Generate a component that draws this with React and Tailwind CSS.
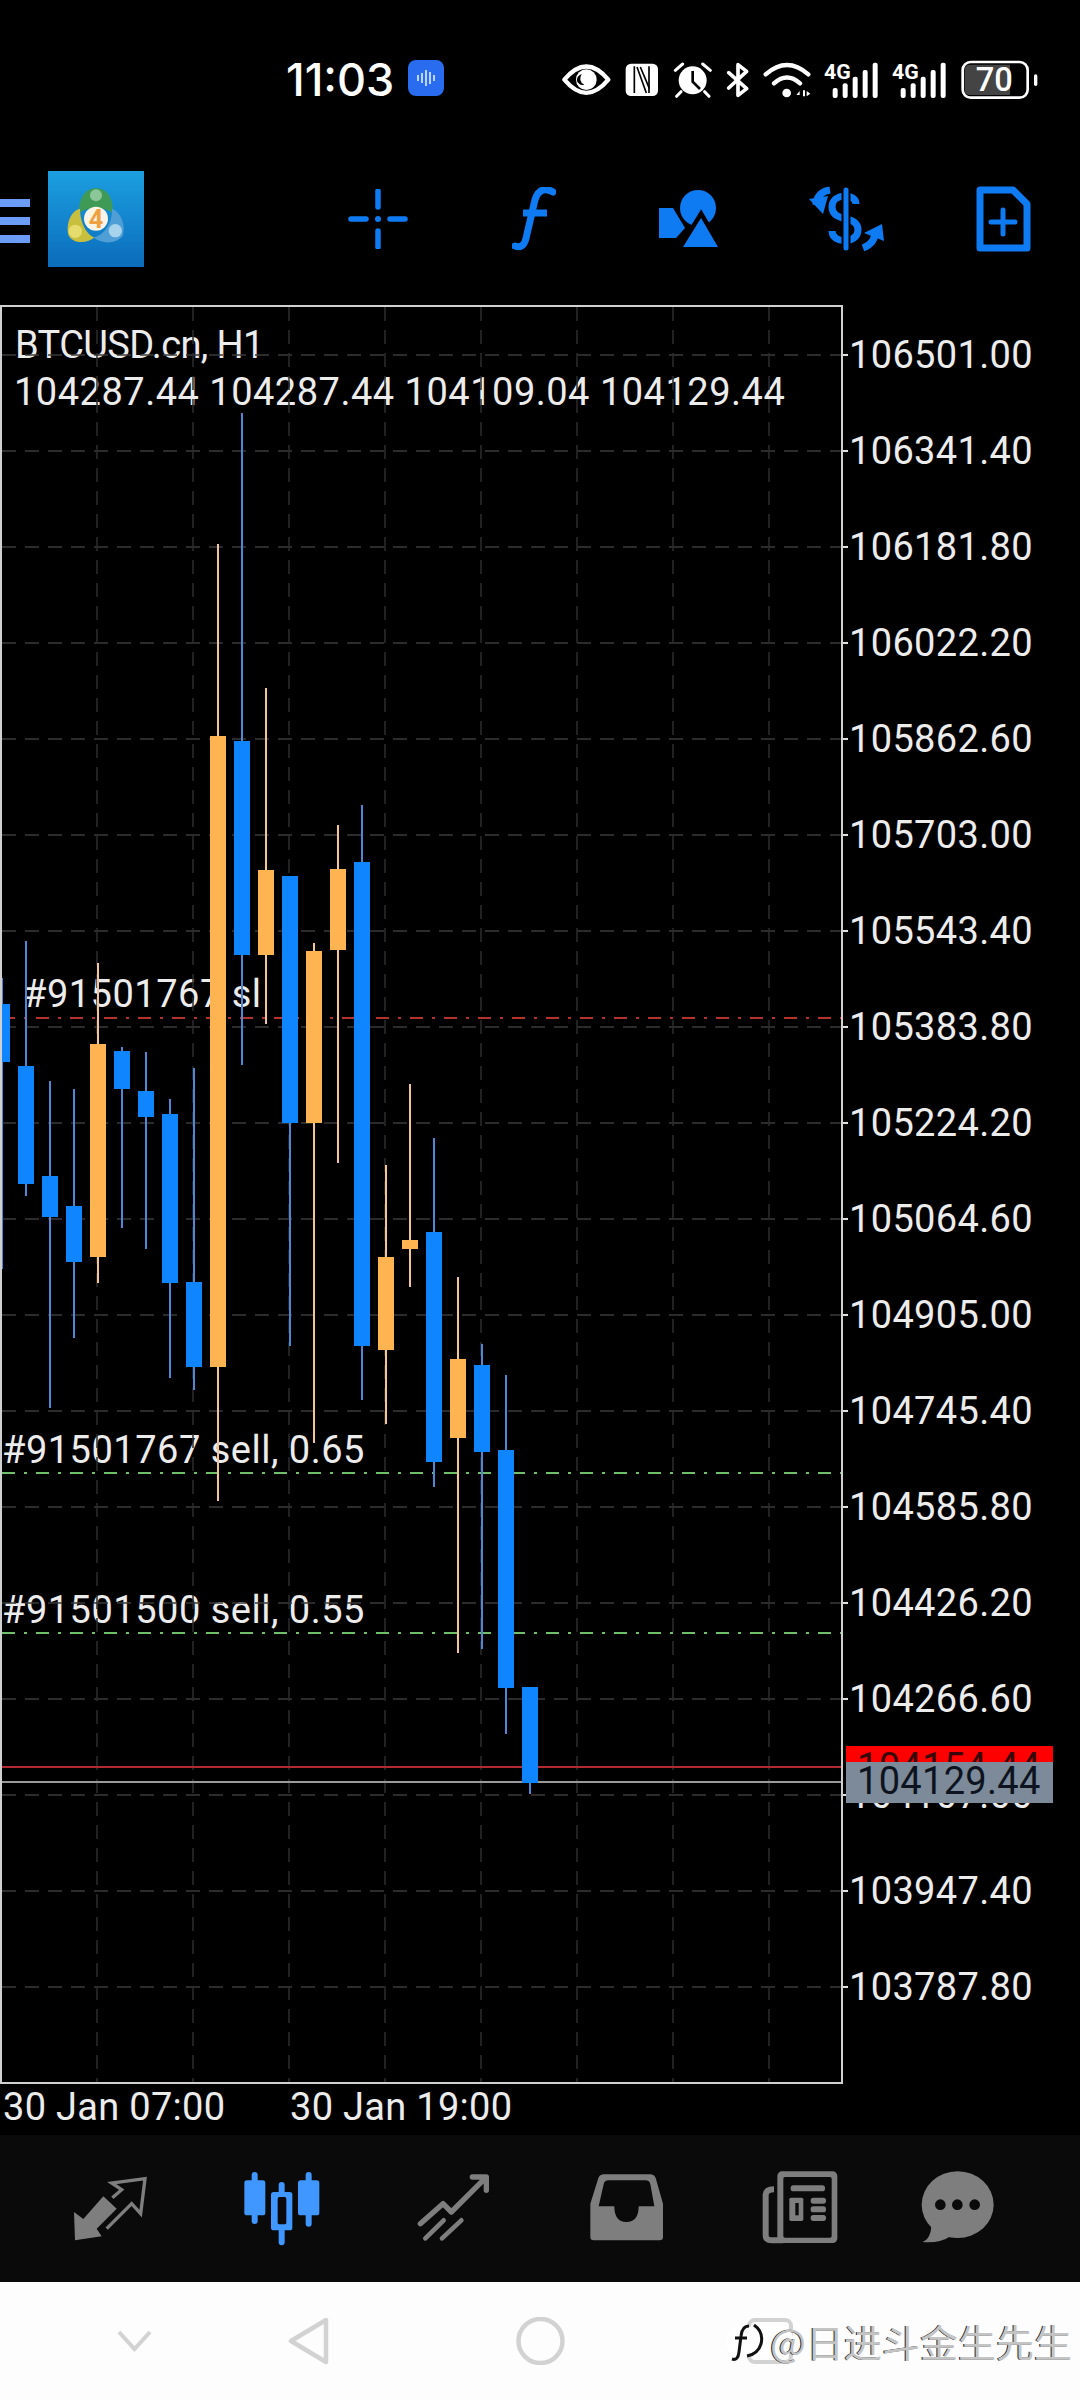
// MT4 chart screen
const GRID_Y = Array.from({ length: 18 }, (_, i) => 355 + i * 96);
const GRID_X = Array.from({ length: 8 }, (_, i) => 97 + i * 96);

const PRICES = [
  '106501.00', '106341.40', '106181.80', '106022.20', '105862.60', '105703.00',
  '105543.40', '105383.80', '105224.20', '105064.60', '104905.00', '104745.40',
  '104585.80', '104426.20', '104266.60', '104107.00', '103947.40', '103787.80',
];

// x, wick top, body top, body bottom, wick bottom, up
const CANDLES = [
  [2, 978, 1004, 1062, 1269, 0],
  [26, 941, 1066, 1184, 1196, 0],
  [50, 1081, 1176, 1217, 1408, 0],
  [74, 1089, 1206, 1262, 1338, 0],
  [98, 963, 1044, 1257, 1283, 1],
  [122, 1047, 1051, 1089, 1228, 0],
  [146, 1052, 1091, 1117, 1249, 0],
  [170, 1099, 1114, 1283, 1378, 0],
  [194, 1068, 1282, 1367, 1390, 0],
  [218, 544, 736, 1367, 1501, 1],
  [242, 413, 741, 955, 1065, 0],
  [266, 688, 870, 955, 1024, 1],
  [290, 876, 876, 1123, 1346, 0],
  [314, 943, 951, 1123, 1443, 1],
  [338, 825, 869, 950, 1163, 1],
  [362, 805, 862, 1346, 1400, 0],
  [386, 1165, 1257, 1350, 1424, 1],
  [410, 1084, 1240, 1249, 1287, 1],
  [434, 1138, 1232, 1462, 1487, 0],
  [458, 1277, 1359, 1438, 1653, 1],
  [482, 1344, 1365, 1452, 1649, 0],
  [506, 1375, 1450, 1688, 1734, 0],
  [530, 1687, 1687, 1783, 1794, 0],
];

function ChartCanvas() {
  return (
    <svg className="absolute inset-0" width="839" height="1775" viewBox="2 307 839 1775">
      {GRID_Y.map((y) => (
        <line key={y} x1="2" x2="841" y1={y} y2={y} stroke="#3a3a3a" strokeWidth="1.5" strokeDasharray="14 9" />
      ))}
      {GRID_X.map((x) => (
        <line key={x} x1={x} x2={x} y1="307" y2="2082" stroke="#2c2c2c" strokeWidth="1.5" strokeDasharray="14 9" />
      ))}
      <line x1="2" x2="841" y1="1018" y2="1018" stroke="#b5332e" strokeWidth="2" strokeDasharray="13 9 3 9" />
      <line x1="2" x2="841" y1="1473" y2="1473" stroke="#6fbf6a" strokeWidth="2" strokeDasharray="13 9 3 9" />
      <line x1="2" x2="841" y1="1633" y2="1633" stroke="#6fbf6a" strokeWidth="2" strokeDasharray="13 9 3 9" />
      <line x1="2" x2="841" y1="1767" y2="1767" stroke="#b02a30" strokeWidth="2" />
      <line x1="2" x2="841" y1="1782" y2="1782" stroke="#9a9a9a" strokeWidth="2" />
      {CANDLES.map(([x, wt, bt, bb, wb, up]) => (
        <g key={x}>
          <line x1={x} x2={x} y1={wt} y2={wb} stroke={up ? '#f4c498' : '#4f86d6'} strokeWidth="2" />
          <rect x={x - 8} y={bt} width="16" height={bb - bt} fill={up ? '#ffb452' : '#0f86ff'} />
        </g>
      ))}
    </svg>
  );
}

function StatusIcons() {
  return (
    <div className="flex items-center ml-[117px]">
      {/* eye */}
      <svg width="52" height="36" viewBox="34 32 156 108">
        <path d="M44 85 Q110 6 176 85 Q110 164 44 85Z" fill="#000" stroke="#fff" strokeWidth="13" strokeLinejoin="round" />
        <circle cx="110" cy="85" r="31" fill="#fff" />
        <path d="M96 68 Q84 90 104 100 Q90 104 82 90 Q80 74 96 68Z" fill="#000" />
      </svg>
      {/* nfc */}
      <svg className="ml-[12px]" width="34" height="34" viewBox="226 36 102 102">
        <rect x="228" y="38" width="97" height="97" rx="16" fill="#fff" />
        <path d="M254 46 V126 M298 46 V126" stroke="#000" strokeWidth="5" />
        <path d="M262 48 L290 126 M272 48 L299 112" stroke="#000" strokeWidth="5" />
      </svg>
      {/* alarm */}
      <svg className="ml-[14px]" width="40" height="36" viewBox="369 33 120 108">
        <circle cx="428" cy="88" r="42" fill="#fff" />
        <path d="M428 60 V92 L450 114" fill="none" stroke="#000" strokeWidth="8" />
        <path d="M376 58 L398 39 M481 58 L458 39 M393 122 L380 136 M464 122 L477 136" stroke="#fff" strokeWidth="9" strokeLinecap="round" />
      </svg>
      {/* bluetooth */}
      <svg className="ml-[13px]" width="24" height="36" viewBox="528 36 72 108">
        <path d="M536 68 L590 116 L564 136 V44 L590 64 L536 114" fill="none" stroke="#fff" strokeWidth="11" strokeLinejoin="round" strokeLinecap="round" />
      </svg>
      {/* wifi */}
      <svg className="ml-[13px]" width="48" height="36" viewBox="640 33 144 108">
        <path d="M648 70 Q712 14 776 70 M673 97 Q712 62 751 97" fill="none" stroke="#fff" strokeWidth="13" strokeLinecap="round" />
        <circle cx="711" cy="126" r="13" fill="#fff" />
        <path d="M740 132 L750 120 V132Z M760 118 H766 V136 H760Z M771 120 L782 128 L771 136Z" fill="#fff" />
      </svg>
      <Signal className="ml-[13px]" />
      <Signal className="ml-[14px]" />
      {/* battery */}
      <svg className="ml-[14px]" width="78" height="40" viewBox="1232 27 234 120">
        <rect x="1240" y="33" width="195" height="107" rx="24" fill="#000" stroke="#fff" strokeWidth="8" />
        <path d="M1262 41 H1382 V132 H1262 Q1246 132 1246 116 V57 Q1246 41 1262 41Z" fill="#444" />
        <text x="1335" y="121" textAnchor="middle" fill="#fff" fontSize="98" fontWeight="500" fontFamily="Roboto, sans-serif">70</text>
        <rect x="1454" y="70" width="10" height="35" rx="5" fill="#fff" />
      </svg>
    </div>
  );
}

function Signal({ className }) {
  return (
    <svg className={className} width="54" height="36" viewBox="824 32 162 108">
      <text x="824" y="84" fill="#fff" fontSize="60" fontWeight="700" fontFamily="Roboto, sans-serif" textLength="80" lengthAdjust="spacingAndGlyphs">4G</text>
      <rect x="850" y="110" width="15" height="30" rx="6" fill="#fff" />
      <rect x="880" y="96" width="15" height="44" rx="6" fill="#fff" />
      <rect x="910" y="76" width="15" height="64" rx="6" fill="#fff" />
      <rect x="940" y="56" width="15" height="84" rx="6" fill="#fff" />
      <rect x="970" y="34" width="15" height="106" rx="6" fill="#fff" />
    </svg>
  );
}

function Mt4Logo() {
  return (
    <svg className="ml-[18px]" width="96" height="96" viewBox="144 33 288 288">
      <defs>
        <linearGradient id="logoBg" x1="0" y1="0" x2="0" y2="1">
          <stop offset="0" stopColor="#1c9fe0" />
          <stop offset="1" stopColor="#0b6cbc" />
        </linearGradient>
      </defs>
      <rect x="144" y="33" width="288" height="288" fill="url(#logoBg)" />
      <path d="M238 160 C234 108 262 85 288 85 C316 85 342 108 338 160 C320 140 256 140 238 160Z" fill="#3f9a55" />
      <circle cx="288" cy="106" r="18" fill="#8cc79a" />
      <path d="M240 146 C212 153 198 190 205 224 C216 252 262 252 284 232 C262 226 240 190 240 146Z" fill="#c9bf3e" />
      <circle cx="226" cy="214" r="20" fill="#e6dc6e" />
      <path d="M336 146 C364 158 378 195 368 228 C346 254 306 252 280 232 C312 226 338 190 336 146Z" fill="#4f9fd6" />
      <circle cx="346" cy="212" r="20" fill="#a7d3ec" />
      <circle cx="288" cy="176" r="36" fill="#fbf3e6" />
      <text x="288" y="203" textAnchor="middle" fill="#f0a040" fontSize="76" fontWeight="700" fontFamily="Roboto, sans-serif">4</text>
    </svg>
  );
}

function Toolbar() {
  const blue = '#0f7bf2';
  return (
    <div className="flex items-center h-[145px] pb-[38px] pt-[11px]">
      <div className="flex flex-col gap-[10px] mt-[4px]">
        <div className="w-[30px] h-[8px] bg-[#6c9df6]" />
        <div className="w-[30px] h-[8px] bg-[#6c9df6]" />
        <div className="w-[30px] h-[8px] bg-[#6c9df6]" />
      </div>
      <Mt4Logo />
      {/* crosshair */}
      <svg className="ml-[204px]" width="60" height="60" viewBox="348 189 60 60">
        <path d="M378 191 V207 M378 231 V247 M351 219 H366 M390 219 H405" stroke={blue} strokeWidth="5.5" strokeLinecap="round" />
        <circle cx="378" cy="219" r="3" fill={blue} />
      </svg>
      {/* function */}
      <svg className="ml-[104px]" width="44" height="64" viewBox="513 187 44 64">
        <path d="M554 192 C544 186 537 192 535 204 L528 234 C526 246 522 248 516 246" fill="none" stroke={blue} strokeWidth="7" strokeLinecap="round" />
        <path d="M524 213 H548" stroke={blue} strokeWidth="7" />
      </svg>
      {/* objects */}
      <svg className="ml-[103px]" width="60" height="60" viewBox="660 188 60 60">
        <path d="M660 207 H674 L686 227 L677 237 H660Z" fill={blue} />
        <ellipse cx="699" cy="207" rx="18" ry="18" fill={blue} />
        <path d="M702 217 L684 246 H719Z" fill={blue} stroke="#000" strokeWidth="9" strokeLinejoin="miter" paintOrder="stroke" />
      </svg>
      {/* trade */}
      <svg className="ml-[90px]" width="76" height="66" viewBox="809 186 76 66">
        <path d="M856 204 C856 193 832 193 832 207 C832 223 858 214 858 230 C858 244 832 244 832 231" fill="none" stroke={blue} strokeWidth="7" />
        <path d="M846 190 V248" stroke="#000" strokeWidth="9" />
        <path d="M846 190 V248" stroke={blue} strokeWidth="5" strokeLinecap="round" />
        <path d="M830 190 Q817 192 816 205" fill="none" stroke={blue} strokeWidth="7" />
        <path d="M809 199 L828 196 L823 214Z" fill={blue} />
        <path d="M863 248 Q876 243 875 230" fill="none" stroke={blue} strokeWidth="7" />
        <path d="M864 233 L882 224 L884 241Z" fill={blue} />
      </svg>
      {/* new order */}
      <svg className="ml-[90px]" width="56" height="68" viewBox="974 185 56 68">
        <path d="M979 190 H1012 L1026 204 V248 H979Z" fill="none" stroke={blue} strokeWidth="7" strokeLinejoin="round" />
        <path d="M1002 210 V234 M990 222 H1014" stroke={blue} strokeWidth="5" strokeLinecap="round" />
      </svg>
    </div>
  );
}

function TabBar() {
  const gray = '#7e7e7e';
  const bg = '#0a0a0a';
  return (
    <div className="flex items-center h-[147px] pb-[3px] pl-[70px] bg-[#0a0a0a]">
      <svg width="80" height="80" viewBox="60 20 240 240">
        <path d="M72 155 L100 176 L160 108 L200 145 L140 205 L155 228 L75 240Z" fill={gray} />
        <path d="M170 205 L245 130 L272 160 L285 55 L185 68 L215 88 L187 112" fill="none" stroke={gray} strokeWidth="10" />
      </svg>
      <svg className="ml-[92px]" width="80" height="80" viewBox="575 20 240 240">
        <path d="M613 44 V182 M775 44 V190 M694 74 V246" stroke="#3f97ff" strokeWidth="18" strokeLinecap="round" />
        <rect x="582" y="60" width="63" height="105" rx="8" fill="#3f97ff" />
        <rect x="743" y="60" width="64" height="105" rx="8" fill="#3f97ff" />
        <rect x="662" y="95" width="64" height="115" rx="8" fill="#3f97ff" />
        <rect x="682" y="110" width="26" height="82" rx="5" fill={bg} />
      </svg>
      <svg className="ml-[91px]" width="80" height="80" viewBox="1090 20 240 240">
        <path d="M1112 190 L1180 130 L1205 155 L1303 57 M1268 50 H1310 V90" fill="none" stroke={gray} strokeWidth="16" strokeLinecap="round" strokeLinejoin="round" />
        <path d="M1127 234 L1182 180 M1177 234 L1235 180" stroke={gray} strokeWidth="14" strokeLinecap="round" />
      </svg>
      <svg className="ml-[94px]" width="80" height="80" viewBox="50 20 240 240">
        <path d="M100 42 H240 Q255 42 258 60 L278 130 V230 Q278 240 268 240 H70 Q60 240 60 230 V130 L82 60 Q85 42 100 42Z" fill={gray} />
        <path d="M115 60 H225 Q238 60 240 72 L252 138 H205 Q205 185 168 185 Q132 185 132 138 H85 L100 72 Q102 60 115 60Z" fill={bg} />
      </svg>
      <svg className="ml-[93px]" width="80" height="80" viewBox="570 20 240 240">
        <path d="M612 87 Q588 87 587 104 V225 Q587 240 605 240 H640" fill="none" stroke={gray} strokeWidth="18" />
        <rect x="622" y="33" width="180" height="215" rx="14" fill={gray} />
        <rect x="640" y="50" width="145" height="182" rx="5" fill={bg} />
        <rect x="662" y="75" width="103" height="18" rx="8" fill={gray} />
        <rect x="658" y="112" width="42" height="70" rx="5" fill={gray} />
        <rect x="676" y="128" width="10" height="37" fill={bg} />
        <rect x="722" y="112" width="46" height="18" rx="8" fill={gray} />
        <rect x="722" y="138" width="46" height="18" rx="8" fill={gray} />
        <rect x="722" y="164" width="46" height="18" rx="8" fill={gray} />
      </svg>
      <svg className="ml-[78px]" width="80" height="80" viewBox="1045 20 240 240">
        <ellipse cx="1164" cy="133" rx="108" ry="100" fill={gray} />
        <path d="M1085 190 Q1085 235 1058 245 Q1110 250 1145 226Z" fill={gray} />
        <circle cx="1112" cy="133" r="16" fill={bg} />
        <circle cx="1163" cy="133" r="16" fill={bg} />
        <circle cx="1215" cy="133" r="16" fill={bg} />
      </svg>
    </div>
  );
}

function NavBar() {
  const c = '#d2d2d2';
  return (
    <div className="flex items-center h-[118px] bg-[#fdfdfd]">
      <svg className="ml-[116px]" width="37" height="22" viewBox="0 0 37 22">
        <path d="M3 2 L18.5 19 L34 2" fill="none" stroke={c} strokeWidth="4" />
      </svg>
      <svg className="ml-[135px]" width="41" height="48" viewBox="0 0 41 48">
        <path d="M38 3 V45 L3 24Z" fill="none" stroke={c} strokeWidth="4.5" strokeLinejoin="round" />
      </svg>
      <svg className="ml-[187px]" width="49" height="48" viewBox="0 0 49 48">
        <ellipse cx="24.5" cy="24" rx="22" ry="22" fill="none" stroke={c} strokeWidth="4.5" />
      </svg>
      {/* recents button under the douyin watermark */}
      <div className="relative ml-[162px] flex items-center">
        <svg width="66" height="46" viewBox="0 0 66 46">
          <rect x="22" y="2" width="42" height="42" rx="6" fill="none" stroke={c} strokeWidth="4" />
          <rect x="0" y="9" width="66" height="28" rx="10" fill="#fff" />
          <path d="M22 8 Q15 8 14 18 L12 34 Q11 43 5 41 M8 20 H20" fill="none" stroke="#111" strokeWidth="3" />
          <path d="M27 7 Q37 14 34 26 Q31 36 20 38" fill="none" stroke="#111" strokeWidth="3" />
        </svg>
        <span className="ml-[-23px] text-[38px] leading-none whitespace-nowrap text-[#c4c4c4] [text-shadow:-1px_0_0_#222] font-['Noto_Sans_CJK_SC',sans-serif]">
          @日进斗金生先生
        </span>
      </div>
    </div>
  );
}

export default function App() {
  return (
    <div className="w-[1080px] h-[2400px] bg-black overflow-hidden text-[#ececec] font-['Roboto',sans-serif]">
      {/* Status bar */}
      <div className="flex items-start h-[160px] pt-[60px] pl-[286px]">
        <span className="w-[108px] text-[45px] leading-[40px] font-medium text-white font-['Inter',sans-serif]">11:03</span>
        <div className="flex items-center justify-center gap-[2px] ml-[14px] w-[36px] h-[36px] rounded-[8px] bg-[#2a6cf0]">
          <span className="w-[2px] h-[6px] bg-[#bcd4ff]" />
          <span className="w-[2px] h-[10px] bg-[#bcd4ff]" />
          <span className="w-[2px] h-[16px] bg-[#bcd4ff]" />
          <span className="w-[2px] h-[12px] bg-[#bcd4ff]" />
          <span className="w-[2px] h-[6px] bg-[#bcd4ff]" />
        </div>
        <StatusIcons />
      </div>

      <Toolbar />

      {/* Chart + price axis */}
      <div className="flex h-[1779px]">
        <div className="relative w-[843px] h-[1779px] border-2 border-[#d0d0d0] overflow-hidden">
          <div className="absolute left-[13px] top-[19px] text-[38px] leading-none whitespace-nowrap tracking-[-0.6px]">BTCUSD.cn, H1</div>
          <div className="absolute left-[12px] top-[66px] text-[38px] leading-none whitespace-nowrap tracking-[0.5px]">104287.44 104287.44 104109.04 104129.44</div>
          <div className="absolute left-[21px] top-[668px] text-[38px] leading-none whitespace-nowrap tracking-[0.5px]">#91501767 sl</div>
          <div className="absolute left-[0px] top-[1124px] text-[38px] leading-none whitespace-nowrap tracking-[0.5px]">#91501767 sell, 0.65</div>
          <div className="absolute left-[0px] top-[1284px] text-[38px] leading-none whitespace-nowrap tracking-[0.5px]">#91501500 sell, 0.55</div>
          <ChartCanvas />
        </div>
        <div className="relative flex-1 pt-[2px]">
          {PRICES.map((p) => (
            <div key={p} className="flex items-center h-[96px]">
              <span className="w-[5px] h-[2px] bg-[#e0e0e0]" />
              <span className="ml-[1px] text-[38px] leading-none tracking-[0.35px]">{p}</span>
            </div>
          ))}
          <div className="absolute left-[3px] top-[1441px] w-[207px] h-[16px] overflow-hidden bg-[#ff0000] pl-[11px] pt-[2px] text-[38px] leading-none tracking-[0.3px] text-[#3a0508]">
            104154.44
          </div>
          <div className="absolute left-[3px] top-[1457px] w-[207px] h-[41px] bg-[#7c8a99] pl-[11px] text-[38px] leading-[38px] tracking-[0.3px] text-[#0d1420]">
            104129.44
          </div>
        </div>
      </div>

      {/* Time axis */}
      <div className="flex h-[51px] pt-[4px] pl-[3px] text-[38px] leading-none tracking-[0.3px]">
        <span className="w-[287px]">30 Jan 07:00</span>
        <span>30 Jan 19:00</span>
      </div>

      <TabBar />
      <NavBar />
    </div>
  );
}
